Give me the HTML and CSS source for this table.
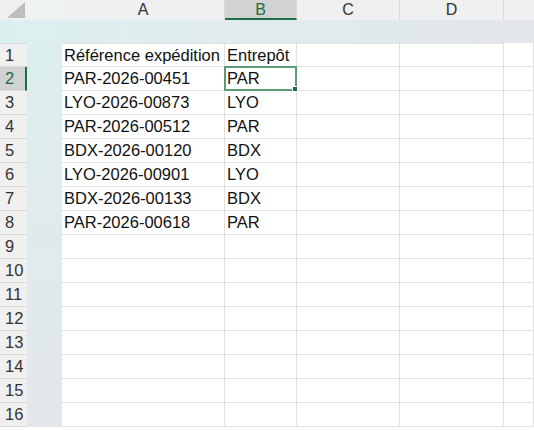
FILE: index.html
```html
<!DOCTYPE html>
<html lang="fr">
<head>
    <meta charset="UTF-8">
    <title>Expéditions</title>
    <link rel="stylesheet" href="styles.css">
</head>
<body>
  <div class="sheet">
    <!-- column headers -->
    <div class="corner"><span class="tri"></span></div>
    <div class="colhead gap"></div>
    <div class="colhead">A</div>
    <div class="colhead active">B</div>
    <div class="colhead">C</div>
    <div class="colhead">D</div>
    <div class="colhead last"></div>

    <div class="band"></div>
    <div class="strip"></div>

    <div class="rowhead r1">1</div>
    <div class="cell">Référence expédition</div><div class="cell">Entrepôt</div><div class="cell"></div><div class="cell"></div><div class="cell"></div>

    <div class="rowhead active">2</div>
    <div class="cell">PAR-2026-00451</div><div class="cell selected">PAR<span class="handle"></span></div><div class="cell"></div><div class="cell"></div><div class="cell"></div>

    <div class="rowhead">3</div>
    <div class="cell">LYO-2026-00873</div><div class="cell">LYO</div><div class="cell"></div><div class="cell"></div><div class="cell"></div>

    <div class="rowhead">4</div>
    <div class="cell">PAR-2026-00512</div><div class="cell">PAR</div><div class="cell"></div><div class="cell"></div><div class="cell"></div>

    <div class="rowhead">5</div>
    <div class="cell">BDX-2026-00120</div><div class="cell">BDX</div><div class="cell"></div><div class="cell"></div><div class="cell"></div>

    <div class="rowhead">6</div>
    <div class="cell">LYO-2026-00901</div><div class="cell">LYO</div><div class="cell"></div><div class="cell"></div><div class="cell"></div>

    <div class="rowhead">7</div>
    <div class="cell">BDX-2026-00133</div><div class="cell">BDX</div><div class="cell"></div><div class="cell"></div><div class="cell"></div>

    <div class="rowhead">8</div>
    <div class="cell">PAR-2026-00618</div><div class="cell">PAR</div><div class="cell"></div><div class="cell"></div><div class="cell"></div>

    <div class="rowhead">9</div>
    <div class="cell"></div><div class="cell"></div><div class="cell"></div><div class="cell"></div><div class="cell"></div>

    <div class="rowhead">10</div>
    <div class="cell"></div><div class="cell"></div><div class="cell"></div><div class="cell"></div><div class="cell"></div>

    <div class="rowhead">11</div>
    <div class="cell"></div><div class="cell"></div><div class="cell"></div><div class="cell"></div><div class="cell"></div>

    <div class="rowhead">12</div>
    <div class="cell"></div><div class="cell"></div><div class="cell"></div><div class="cell"></div><div class="cell"></div>

    <div class="rowhead">13</div>
    <div class="cell"></div><div class="cell"></div><div class="cell"></div><div class="cell"></div><div class="cell"></div>

    <div class="rowhead">14</div>
    <div class="cell"></div><div class="cell"></div><div class="cell"></div><div class="cell"></div><div class="cell"></div>

    <div class="rowhead">15</div>
    <div class="cell"></div><div class="cell"></div><div class="cell"></div><div class="cell"></div><div class="cell"></div>

    <div class="rowhead">16</div>
    <div class="cell"></div><div class="cell"></div><div class="cell"></div><div class="cell"></div><div class="cell"></div>
  </div>
</body>
</html>
```

FILE: styles.css
```css
body {
    margin: 0;
    padding: 0;
    background-color: #fff;
    font-family: "Liberation Sans", Arial, sans-serif;
    overflow: hidden;
}
.sheet {
    display: grid;
    grid-template-columns: 27px 35px 163px 72px 103px 104px 30px;
    grid-template-rows: 20px 23px repeat(16, 24px);
    width: 534px;
    height: 430px;
    color: #111;
}
.corner {
    position: relative;
    background-color: #f0f0f0;
}
.tri {
    position: absolute;
    right: 2px;
    bottom: 2px;
    width: 0;
    height: 0;
    border-left: 18px solid transparent;
    border-bottom: 16px solid #bdbdbd;
}
.colhead {
    background-color: #f0f0f0;
    box-sizing: border-box;
    border-right: 1px solid #dadada;
    font-size: 16px;
    color: #333;
    text-align: center;
    line-height: 20px;
}
.colhead.gap {
    background-color: #eef2f2;
    border-right: none;
}
.colhead.last {
    border-right: none;
}
.colhead.active {
    background-color: #d2d2d2;
    color: #1b6e43;
    border-bottom: 2px solid #1b6e43;
    line-height: 19px;
}
.band {
    grid-column: 1 / -1;
    grid-row: 2;
    background: linear-gradient(to right, #dcefef, #e0ecee 40%, #e3e6eb);
}
.strip {
    grid-column: 2;
    grid-row: 3 / -1;
    background: linear-gradient(to bottom, #dceeee, #e0eaed 50%, #e3e7eb);
}
.rowhead {
    grid-column: 1;
    background-color: #f0f0f0;
    box-sizing: border-box;
    border-bottom: 1px solid #dadada;
    padding-left: 5px;
    font-size: 16.5px;
    line-height: 23px;
    color: #333;
}
.rowhead.r1 {
    border-top: 1px solid #dadada;
}
.rowhead.active {
    background-color: #d2d2d2;
    color: #1b6e43;
    border-right: 2px solid #1b6e43;
}
.cell {
    box-sizing: border-box;
    border-right: 1px solid #e1e1e1;
    border-bottom: 1px solid #e1e1e1;
    padding-left: 2px;
    font-size: 16.5px;
    line-height: 23px;
    white-space: nowrap;
    overflow: hidden;
}
.rowhead + .cell {
    grid-column: 3;
}
.rowhead.r1 ~ .cell:nth-child(-n+14) {
    border-top: 1px solid #e1e1e1;
}
.selected {
    position: relative;
    overflow: visible;
    margin: -1px 0 0 -1px;
    border: 2px solid #5e9c78;
    padding-left: 1px;
    line-height: 21px;
}
.handle {
    position: absolute;
    right: -3px;
    bottom: -3px;
    width: 4px;
    height: 4px;
    background-color: #1b6e43;
    border: 1px solid #fff;
}
```
